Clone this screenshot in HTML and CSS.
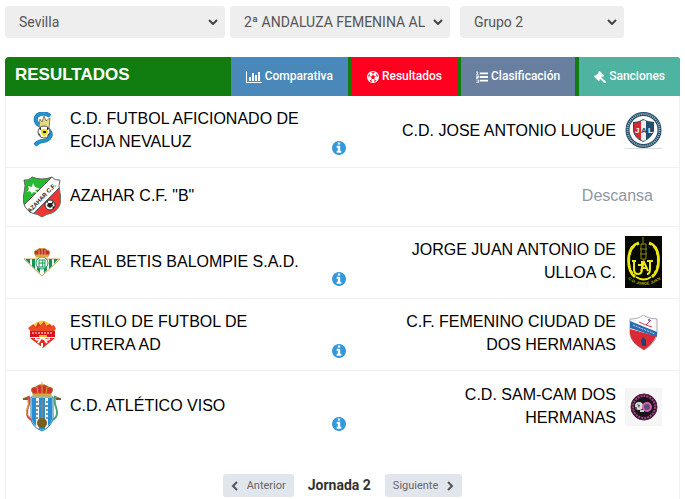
FILE: index.html
```html
<!DOCTYPE html>
<html lang="es">
<head>
    <meta charset="UTF-8">
    <meta name="viewport" content="width=device-width, initial-scale=1">
    <title>Resultados</title>
    <link rel="stylesheet" href="styles.css">
</head>
<body>
    <!-- Shared icon -->
    <svg class="sprite" aria-hidden="true">
        <symbol id="info" viewBox="128 128 1536 1536">
            <path d="M1152 1376v-160q0-14-9-23t-23-9h-96v-512q0-14-9-23t-23-9h-320q-14 0-23 9t-9 23v160q0 14 9 23t23 9h96v320h-96q-14 0-23 9t-9 23v160q0 14 9 23t23 9h448q14 0 23-9t9-23zm-128-896v-160q0-14-9-23t-23-9h-192q-14 0-23 9t-9 23v160q0 14 9 23t23 9h192q14 0 23-9t9-23zm640 416q0 209-103 385.500t-279.500 279.500-385.500 103-385.500-103-279.500-279.500-103-385.500 103-385.500 279.500-279.500 385.500-103 385.500 103 279.500 279.500 103 385.500z"/>
        </symbol>
    </svg>

    <form class="filters">
        <select class="filter" aria-label="Provincia">
            <option>Sevilla</option>
        </select>
        <select class="filter" aria-label="Competición">
            <option>2ª ANDALUZA FEMENINA AL</option>
        </select>
        <select class="filter filter-group" aria-label="Grupo">
            <option>Grupo 2</option>
        </select>
    </form>

    <main class="panel">
        <header class="panel-header">
            <h1>RESULTADOS</h1>
            <nav class="tabs">
                <a href="#" class="tab tab-compare">
                    <svg width="16" height="12" viewBox="0 128 2048 1536"><path d="M640 896v512h-256v-512h256zM1024 384v1024h-256v-1024h256zM2048 1536v128h-2048v-1536h128v1408h1920zM1408 640v768h-256v-768h256zM1792 256v1152h-256v-1152h256z"/></svg>
                    Comparativa
                </a>
                <a href="#" class="tab tab-results">
                    <svg width="12" height="12" viewBox="0 0 24 24"><circle cx="12" cy="12" r="12"/><path class="cut" d="M12 8l4 3-1.500 5h-5L8 11zM8 3l4 2.500L16 3l-4-1zM2 12l3-2 1-5-3 3zM22 12l-3-2-1-5 3 3zM5 18l4 .5 1 3.500-3-1zM19 18l-4 .5-1 3.500 3-1z"/><path class="seam" d="M12 5.500V8M5 10l3 1M19 10l-3 1M9.500 16L8 18.500M14.500 16l1.500 2.500"/></svg>
                    Resultados
                </a>
                <a href="#" class="tab tab-table">
                    <svg width="12" height="12" viewBox="0 0 26 26"><path d="M8 3h18v4H8zM8 11h18v4H8zM8 19h18v4H8zM1 1h3v6h2v1H0V7h2V3H0zM0 10h6v4l-3 2h3v1H0v-3l4-2H0zM0 19h6v7H0v-1h4v-2H1v-1h3v-2H0z"/></svg>
                    Clasificación
                </a>
                <a href="#" class="tab tab-sanctions">
                    <svg width="12" height="12" viewBox="0 0 26 26"><path d="M12 0l10 10-2 3-2-1-2 2 9 8q2 2 0 3.500t-3.500 0L13 17l-1 1 1 2-3 2L0 12l2-3 2 1 6-6-1-2z"/></svg>
                    Sanciones
                </a>
            </nav>
        </header>

        <div class="matches">
            <article class="match">
                <div class="team">
                    <svg class="crest" width="38" height="38" viewBox="0 0 38 38">
                        <path d="M27 4C21-1 11 2 13 9c1 5 6 5 11 8 7 5 3 11-4 12-4 0-6 2-8 4" fill="none" stroke="#176ba0" stroke-width="4"/>
                        <path d="M27 4C21-1 11 2 13 9c1 5 6 5 11 8 7 5 3 11-4 12-4 0-6 2-8 4" fill="none" stroke="#2494d1" stroke-width="3"/>
                        <path d="M16 15l1-8 2 3 2-6 2 5 4-3-1 10z" fill="#e6d985" stroke="#888263"/>
                        <circle cx="21" cy="20" r="6" fill="#fff" stroke="#555"/>
                        <path d="M18 17h6l1 4-4 4-3-4z" fill="#f0dc17"/>
                        <path d="M16 17l2-2v3zM24 15l2 2-2 1zM15 21l2 1 1 3zM24 25l1-3 2-1zM20 19h3v2h-3z" fill="#222"/>
                    </svg>
                    <span class="name">C.D. FUTBOL AFICIONADO DE ECIJA NEVALUZ</span>
                </div>
                <a href="#" class="info" aria-label="Información"><svg width="14" height="14"><use href="#info"/></svg></a>
                <div class="team away">
                    <svg class="crest" width="37" height="38" viewBox="0 0 37 38">
                        <path d="M0 36h37v1H0z" fill="#ddd"/>
                        <circle cx="18.500" cy="18" r="16" fill="#fff" stroke="#244d69" stroke-width="4"/>
                        <circle cx="18.500" cy="18" r="16" fill="none" stroke="#a5bac5" stroke-width="2" stroke-dasharray="1 1"/>
                        <path d="M8 10q6 0 10-3 5 3 11 3v9q-2 7-11 11Q9 26 8 19z" fill="#244d69"/>
                        <path d="M9 11q4 0 7-2v19q-7-4-7-10z" fill="#d82735"/>
                        <path d="M16 9l3-1 2 1v19l-3 1-2-1z" fill="#e9eef2"/>
                        <text x="10" y="21" font-size="8" fill="#fff">J</text>
                        <text x="16" y="21" font-size="8" fill="#244d69">A</text>
                        <text x="23" y="21" font-size="8" fill="#fff">L</text>
                    </svg>
                    <span class="name">C.D. JOSE ANTONIO LUQUE</span>
                </div>
            </article>

            <article class="match match-rest">
                <div class="team">
                    <svg class="crest" width="38" height="42" viewBox="0 0 38 42">
                        <defs><clipPath id="shield"><path d="M1 4Q6 5 9 1q10 4 20 0 3 4 8 3-2 5 0 13c2 9 0 16-8 20q-6 1-10 4-4-3-10-4C1 33-1 26 1 17Q3 9 1 4z"/></clipPath></defs>
                        <g clip-path="url(#shield)">
                            <path d="M0 0h38v42H0z" fill="#ee3632"/>
                            <path d="M0 0h38L0 38z" fill="#25ba32"/>
                            <path d="M30 0h8v10L10 38H0v-8z" fill="#fff" stroke="#555"/>
                        </g>
                        <path d="M1 4Q6 5 9 1q10 4 20 0 3 4 8 3-2 5 0 13c2 9 0 16-8 20q-6 1-10 4-4-3-10-4C1 33-1 26 1 17Q3 9 1 4z" fill="none" stroke="#646b62"/>
                        <path d="M5 10l4 1 1-4 2 4 5 2-5 1 3 3-5-1-1 2-2-3-3 1 2-3z" fill="#fff"/>
                        <text x="7" y="37" font-size="6" transform="rotate(-46 7 37)" fill="#222">AZAHAR C.F.</text>
                        <circle cx="27" cy="29" r="5" fill="#fff" stroke="#333"/>
                        <path d="M25 27h4l1 3-3 2-3-2zM23 26l2-1v2zM29 25l2 2-2 1zM29 32l2-2v3z" fill="#222"/>
                    </svg>
                    <span class="name">AZAHAR C.F. "B"</span>
                </div>
                <p class="rest">Descansa</p>
            </article>

            <article class="match">
                <div class="team">
                    <svg class="crest" width="38" height="30" viewBox="0 0 38 30">
                        <path d="M1 12h36L19 29z" fill="#fff" stroke="#c0a354"/>
                        <path d="M3 12h4v5l-4-4zM9 12h3v10l-3-3zM14 12h3v14l-3-3zM21 12h3v11l-3 3zM26 12h3v7l-3 3zM31 12h4l-4 5z" fill="#159451"/>
                        <circle cx="19" cy="16" r="6" fill="#fff" stroke="#159451"/>
                        <path d="M16 13h3q2 1 0 3 2 2 0 4h-3zM22 13h-3M22 13v7h-3M16 16h6" fill="none" stroke="#159451"/>
                        <path d="M13 9q-4-5 1-6 3-3 5-1 2-2 5 1 5 1 1 6z" fill="#cc2635" stroke="#c19b43"/>
                        <path d="M13 8h12v2H13zM16 3v5M19 1v7M22 3v5" fill="#d2ae45" stroke="#d2ae45"/>
                    </svg>
                    <span class="name">REAL BETIS BALOMPIE S.A.D.</span>
                </div>
                <a href="#" class="info" aria-label="Información"><svg width="14" height="14"><use href="#info"/></svg></a>
                <div class="team away">
                    <svg class="crest" width="37" height="52" viewBox="0 0 37 52">
                        <path d="M0 0h37v52H0z" fill="#050800"/>
                        <path d="M14 7C1 11 1 33 10 41M24 7c12 4 12 26 3 34" fill="none" stroke="#ede710" stroke-width="3"/>
                        <path d="M12 9C4 15 4 31 9 38M26 9c7 6 7 22 2 29" fill="none" stroke="#050800" stroke-dasharray="3 3"/>
                        <path d="M18 1v8M16 8h5v15h-5zM15 13h7M15 18h7" fill="none" stroke="#8a8810"/>
                        <path d="M9 25v8q0 5 4 5t4-5v-8M7 25h4M13 29h4M25 25v8q0 5-3 5M22 25h6M16 35l3-9 4 9M17 32h5" fill="none" stroke="#ede710" stroke-width="2"/>
                        <path d="M11 41q8 5 15 0" fill="none" stroke="#ede710" stroke-width="2"/>
                        <path id="motto" d="M3 43q15 12 33 0" fill="none"/>
                        <text font-size="4" fill="#bab511"><textPath href="#motto">C.D. JORGE JUAN</textPath></text>
                    </svg>
                    <span class="name">JORGE JUAN ANTONIO DE ULLOA C.</span>
                </div>
            </article>

            <article class="match">
                <div class="team">
                    <svg class="crest" width="38" height="38" viewBox="0 0 38 38">
                        <path d="M8 12q11-13 22 0z" fill="#f5d13f"/>
                        <path d="M7 13l3-4 3 3 2-5 3 4 3-5 2 5 4-2 3 4z" fill="#e62b24"/>
                        <path d="M5 13l4-3 5 3 6-5 5 4 6-2 2 4-3 3H8z" fill="#ed4a21"/>
                        <path d="M7 16h25v6H7z" fill="#db111d"/>
                        <path d="M9 18h21" stroke="#fff" stroke-dasharray="2 1"/>
                        <path d="M7 23h25L20 33z" fill="#e62b24"/>
                        <path d="M12 24l4 1 3-2 4 2 4-1M17 25l-2 3M22 25l2 3M19 28v4" fill="none" stroke="#fff" stroke-width="2"/>
                        <path d="M16 20h8v2h-8z" fill="#efb62c"/>
                    </svg>
                    <span class="name">ESTILO DE FUTBOL DE UTRERA AD</span>
                </div>
                <a href="#" class="info" aria-label="Información"><svg width="14" height="14"><use href="#info"/></svg></a>
                <div class="team away">
                    <svg class="crest" width="37" height="38" viewBox="0 0 37 38">
                        <path d="M5 4q9 0 13-4 5 4 14 4v15q-2 10-13 16Q6 28 5 19z" fill="#fff" stroke="#a9a6b0"/>
                        <path d="M5 14l26 7q-3 8-12 14Q6 28 5 19z" fill="#da2937"/>
                        <path d="M5 6l27 11v5L5 13z" fill="#2e6bae"/>
                        <path d="M8 10l22 9" stroke="#c5d8ec" stroke-dasharray="2 1"/>
                        <path d="M14 7l7 3 5-5M21 10l6 2" fill="none" stroke="#df3e4b"/>
                        <circle cx="24" cy="5" r="1" fill="#2e6bae"/>
                        <path d="M16 25l2-3 3 3v6h-4z" fill="#24406d"/>
                    </svg>
                    <span class="name">C.F. FEMENINO CIUDAD DE DOS HERMANAS</span>
                </div>
            </article>

            <article class="match">
                <div class="team">
                    <svg class="crest" width="38" height="50" viewBox="0 0 38 50">
                        <path d="M8 15h22v22q-2 8-11 12Q9 45 8 37z" fill="#e9f2f8" stroke="#2a79aa"/>
                        <path d="M9 16h4v28q-4-3-4-7zM16 16h6v31l-3 1-3-1zM25 16h4v21q-1 5-4 7z" fill="#248fd1"/>
                        <path d="M14 19v19M24 19v19" stroke="#333" stroke-dasharray="2 2"/>
                        <path d="M19 18v21M14 24h10" stroke="#6e8699" stroke-width="2"/>
                        <circle cx="19" cy="41" r="5" fill="#795e20"/>
                        <path d="M1 17l5-2q1 6-1 10-2 6 0 10l3 3" fill="none" stroke="#d4483b" stroke-width="2"/>
                        <path d="M3 16q4 6 1 11-2 5 3 8" fill="none" stroke="#d9b548"/>
                        <path d="M37 17l-5-2q-1 6 1 10 2 6 0 10l-3 3" fill="none" stroke="#42a66c" stroke-width="2"/>
                        <path d="M0 17h5M33 17h5" stroke="#80582c" stroke-width="2"/>
                        <path d="M11 13Q5 5 13 5q3-3 6-2 3-1 6 2 8 0 2 8z" fill="#d52e2f" stroke="#a47b2a"/>
                        <path d="M10 12h18v2H10zM19 0v12M14 5l1 7M24 5l-1 7" fill="#d2a83b" stroke="#d2a83b"/>
                    </svg>
                    <span class="name">C.D. ATLÉTICO VISO</span>
                </div>
                <a href="#" class="info" aria-label="Información"><svg width="14" height="14"><use href="#info"/></svg></a>
                <div class="team away">
                    <svg class="crest" width="37" height="38" viewBox="0 0 37 38">
                        <path d="M0 0h37v38H0z" fill="#f5f5f5"/>
                        <circle cx="19" cy="19" r="13" fill="#241420" stroke="#591e43"/>
                        <circle cx="19" cy="19" r="11" fill="none" stroke="#a64685" stroke-width="2" stroke-dasharray="2 1"/>
                        <circle cx="19" cy="19" r="9" fill="#18151a"/>
                        <circle cx="14" cy="18" r="4" fill="#ddd"/>
                        <path d="M12 16l3 1-1 3zM10 19h2v2h-2z" fill="#555"/>
                        <circle cx="22" cy="19" r="4" fill="#625064" stroke="#d260c1" stroke-width="2"/>
                        <path d="M15 22h4v2h-4z" fill="#ccc"/>
                    </svg>
                    <span class="name">C.D. SAM-CAM DOS HERMANAS</span>
                </div>
            </article>
        </div>

        <footer class="pager">
            <button type="button" class="page-btn">
                <svg width="7" height="10" viewBox="0 0 7 10"><path d="M6 1L2 5l4 4"/></svg>
                Anterior
            </button>
            <strong class="round">Jornada 2</strong>
            <button type="button" class="page-btn">
                Siguiente
                <svg width="7" height="10" viewBox="0 0 7 10"><path d="M1 1l4 4-4 4"/></svg>
            </button>
        </footer>
    </main>
</body>
</html>
```
FILE: styles.css
```css
* {
    box-sizing: border-box;
}

body {
    font-family: "Liberation Sans", Arial, sans-serif;
    font-size: 16px;
    line-height: 23px;
    color: #000;
    background: #fff;
    margin: 0;
    padding: 6px 5px 0;
}

a {
    text-decoration: none;
}

.sprite {
    display: none;
}

/* Filters */
.filters {
    display: flex;
    gap: 5px;
    margin-bottom: 19px;
}

.filter {
    width: 220px;
    height: 32px;
    padding: 0 20px 0 14px;
    border: none;
    border-radius: 4px;
    appearance: none;
    font-family: Roboto, sans-serif;
    font-size: 14px;
    color: #555;
    background: #eee url("data:image/svg+xml,%3Csvg xmlns='http://www.w3.org/2000/svg' width='10' height='6'%3E%3Cpath d='M1 1l4 4 4-4' fill='none' stroke='%23444' stroke-width='2'/%3E%3C/svg%3E") no-repeat right 7px center;
}

.filter-group {
    width: 164px;
    margin-left: 5px;
}

/* Panel header and tabs */
.panel-header {
    display: flex;
    justify-content: space-between;
    height: 39px;
    background: #117d11;
    border-radius: 4px 4px 0 0;
    overflow: hidden;
}

.panel-header h1 {
    margin: 0;
    padding: 6px 10px;
    font-size: 17px;
    color: #fff;
}

.tabs {
    display: flex;
    gap: 4px;
}

.tab {
    display: flex;
    align-items: center;
    gap: 3px;
    padding: 0 15px;
    font-family: Roboto, sans-serif;
    font-size: 12px;
    font-weight: 500;
    color: #fff;
}

.tab svg {
    fill: #fff;
}

.tab .cut {
    fill: #ff0020;
}

.tab .seam {
    fill: none;
    stroke: #ff0020;
}

.tab-compare {
    background: #4b88ba;
}

.tab-results {
    background: #ff0020;
}

.tab-table {
    background: #697fa0;
}

.tab-sanctions {
    background: #4fb3a2;
}

/* Matches */
.matches,
.pager {
    border: solid #eef0f2;
    border-width: 0 1px;
}

.match {
    display: grid;
    grid-template-columns: 49fr 16px 50fr;
    min-height: 72px;
    padding: 9px 17px 10px;
    border-bottom: 1px solid #eef0f2;
}

.match:last-child {
    border-bottom: none;
}

.match-rest {
    min-height: 59px;
    padding-top: 7px;
    padding-bottom: 8px;
}

.team {
    display: flex;
    align-items: center;
    gap: 9px;
    padding-right: 22px;
}

.away {
    flex-direction: row-reverse;
    padding: 0 0 0 30px;
    text-align: right;
}

.name,
.rest {
    padding-bottom: 2px;
}

.crest {
    flex: none;
    font-weight: bold;
}

.info {
    align-self: end;
    justify-self: center;
    height: 16px;
}

.info svg {
    display: block;
    fill: #3498db;
}

.rest {
    grid-column: 3;
    align-self: center;
    margin: 0;
    padding-right: 9px;
    text-align: right;
    color: #8d98a3;
}

/* Round navigation */
.pager {
    display: flex;
    justify-content: center;
    align-items: center;
    gap: 14px;
    padding: 31px 0 2px;
}

.page-btn {
    display: flex;
    align-items: center;
    gap: 9px;
    height: 23px;
    padding: 0 8px;
    border: none;
    border-radius: 3px;
    font-family: Roboto, sans-serif;
    font-size: 11px;
    color: #666;
    background: #e1e5ec;
    cursor: pointer;
}

.page-btn svg {
    fill: none;
    stroke: #555;
    stroke-width: 2;
}

.round {
    font-family: Roboto, sans-serif;
    font-size: 14px;
    color: #333;
}
```
